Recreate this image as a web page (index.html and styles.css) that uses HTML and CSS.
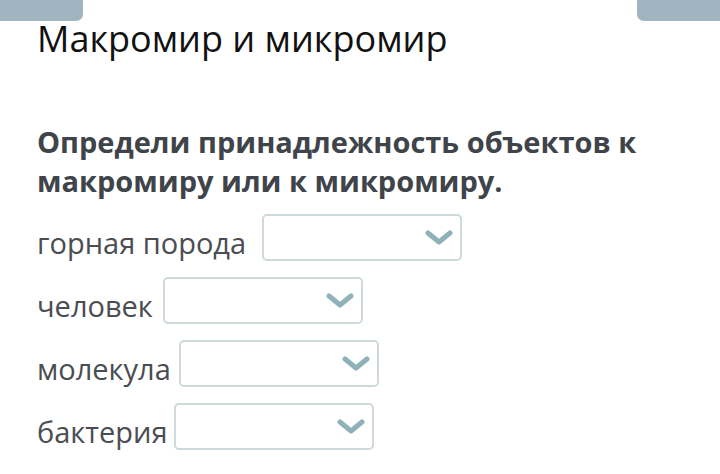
FILE: index.html
```html
<!DOCTYPE html>
<html lang="ru">
<head>
<meta charset="utf-8">
<link rel="stylesheet" href="styles.css">
</head>
<body>
<div class="topbar">
  <div class="tab tab-left"></div>
  <div class="tab tab-right"></div>
</div>
<main class="content">
  <h1 class="title">Макромир и микромир</h1>
  <p class="task">Определи принадлежность объектов к макромиру или к микромиру.</p>
  <div class="rows">
    <div class="row row-wide"><span class="label">горная порода</span><div class="select"><svg class="chev" viewBox="0 0 28 16"><path d="M3 3 L14 12 L25 3" /></svg></div></div>
    <div class="row"><span class="label">человек</span><div class="select"><svg class="chev" viewBox="0 0 28 16"><path d="M3 3 L14 12 L25 3" /></svg></div></div>
    <div class="row row-mid"><span class="label">молекула</span><div class="select"><svg class="chev" viewBox="0 0 28 16"><path d="M3 3 L14 12 L25 3" /></svg></div></div>
    <div class="row row-tight"><span class="label">бактерия</span><div class="select"><svg class="chev" viewBox="0 0 28 16"><path d="M3 3 L14 12 L25 3" /></svg></div></div>
  </div>
</main>
</body>
</html>
```
FILE: styles.css
```css
html, body {
  margin: 0;
  padding: 0;
  background: #ffffff;
}
body {
  width: 720px;
  height: 474px;
  overflow: hidden;
  font-family: "Open Sans", "Noto Sans", sans-serif;
}
.topbar {
  display: flex;
  justify-content: space-between;
  height: 21px;
}
.tab {
  width: 83px;
  height: 21px;
  background: #a1b5c1;
}
.tab-left { border-bottom-right-radius: 7px; }
.tab-right { border-bottom-left-radius: 7px; }
.content {
  padding-left: 37px;
}
.title {
  margin: 0;
  font-weight: 400;
  font-size: 36px;
  line-height: 36px;
  color: #111;
}
.task {
  margin: 65px 0 0 0;
  font-weight: 700;
  font-size: 29px;
  line-height: 39px;
  color: #3f444a;
  width: 660px;
}
.rows {
  margin-top: 14px;
  display: flex;
  flex-direction: column;
  gap: 16px;
}
.row {
  display: flex;
  align-items: flex-start;
  gap: 10px;
}
.row-wide { gap: 16px; }
.row-mid { gap: 8px; }
.row-tight { gap: 6px; }
.label {
  font-size: 29px;
  color: #4a4d51;
  line-height: 37px;
  padding-top: 10px;
}
.select {
  width: 196px;
  height: 43px;
  border: 2px solid #cdd9db;
  border-radius: 5px;
  position: relative;
}
.chev {
  position: absolute;
  right: 7px;
  top: 14px;
  width: 28px;
  height: 16px;
}
.chev path {
  fill: none;
  stroke: #8fb2b9;
  stroke-width: 5;
  stroke-linecap: round;
  stroke-linejoin: round;
}
```
